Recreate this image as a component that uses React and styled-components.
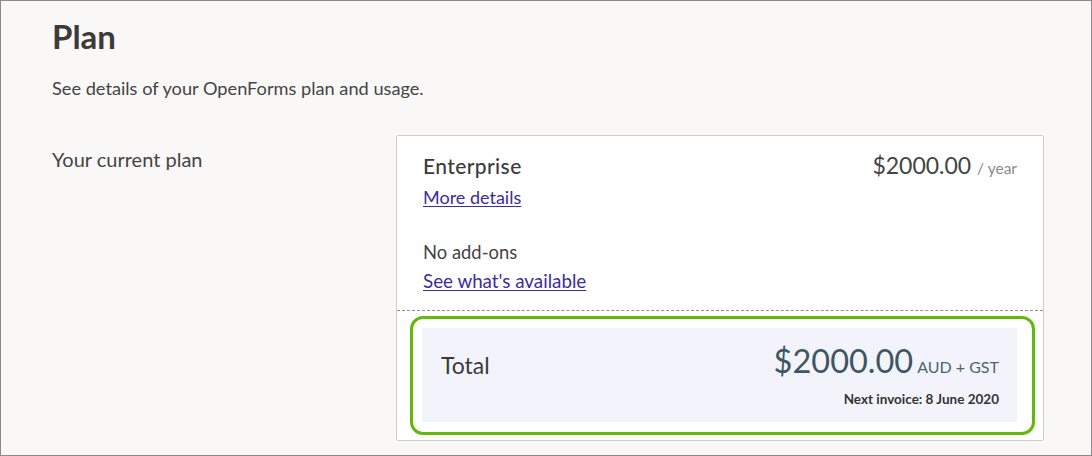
import React from "react";
import styled, { createGlobalStyle } from "styled-components";

const GlobalStyle = createGlobalStyle`
  html, body {
    margin: 0;
    padding: 0;
  }
  body {
    font-family: "Lato", "Open Sans", sans-serif;
    color: #3c3c3c;
  }
`;

const Frame = styled.div`
  box-sizing: border-box;
  width: 1092px;
  height: 456px;
  border: 1px solid #8a8a8a;
  background: #f9f8f7;
  padding: 15px 0 0 51px;
  overflow: hidden;
`;

const Title = styled.h1`
  margin: 0;
  font-size: 33px;
  font-weight: 700;
  line-height: 40px;
  color: #3b3b3b;
`;

const Intro = styled.p`
  margin: 20px 0 0;
  font-size: 18.2px;
  line-height: 24px;
  color: #444;
`;

const Row = styled.div`
  display: grid;
  grid-template-columns: 344px 648px;
  margin-top: 35px;
`;

const Label = styled.div`
  font-size: 20px;
  line-height: 24px;
  color: #444;
  padding-top: 12px;
`;

const Card = styled.div`
  background: #fff;
  border: 1px solid #cfcfcf;
  border-radius: 2px;
`;

const Section = styled.div`
  padding: 15px 26px 17px 26px;
  border-bottom: 1px dashed #8f8f8f;
`;

const PlanLine = styled.div`
  display: flex;
  justify-content: space-between;
  align-items: baseline;
  line-height: 28px;
`;

const PlanName = styled.div`
  font-size: 21px;
  font-weight: 500;
  letter-spacing: 0.4px;
  color: #3b3b3b;
`;

const Price = styled.div`
  font-size: 23px;
  color: #444;
  span {
    font-size: 15.5px;
    color: #8a8a8a;
  }
`;

const Link = styled.a`
  display: inline-block;
  font-size: ${(p) => p.$size || 18}px;
  line-height: 24px;
  color: #3b2d9b;
  text-decoration: underline;
  text-underline-offset: 2px;
  margin-top: ${(p) => p.$gap || 0}px;
  cursor: pointer;
`;

const Plain = styled.div`
  font-size: 18.4px;
  line-height: 24px;
  color: #444;
  margin-top: ${(p) => p.$gap || 0}px;
`;

const Highlight = styled.div`
  margin: 5px 8px 5px 13px;
  border: 3px solid #63b80a;
  border-radius: 13px;
  padding: 9px 15px 10px 9px;
`;

const TotalBox = styled.div`
  box-sizing: border-box;
  height: 94px;
  background: #f3f4fb;
  display: flex;
  justify-content: space-between;
  align-items: flex-start;
  padding: 14px 18px 0 19px;
`;

const TotalLabel = styled.div`
  font-size: 23px;
  line-height: 30px;
  color: #3b3b3b;
  padding-top: 8px;
`;

const TotalRight = styled.div`
  text-align: right;
`;

const BigPrice = styled.div`
  font-size: 32.5px;
  line-height: 38px;
  color: #3d5664;
  span {
    font-size: 16px;
    color: #4b6472;
    margin-left: 4px;
  }
`;

const Invoice = styled.div`
  margin-top: 5px;
  font-size: 13.5px;
  line-height: 16px;
  font-weight: 700;
  color: #333;
`;

export default function App() {
  return (
    <>
      <GlobalStyle />
      <Frame>
        <Title>Plan</Title>
        <Intro>See details of your OpenForms plan and usage.</Intro>
        <Row>
          <Label>Your current plan</Label>
          <Card>
            <Section>
              <PlanLine>
                <PlanName>Enterprise</PlanName>
                <Price>
                  $2000.00 <span>/ year</span>
                </Price>
              </PlanLine>
              <Link $gap={3} $size={18}>More details</Link>
              <Plain $gap={31}>No add-ons</Plain>
              <Link $gap={5} $size={18.8}>See what's available</Link>
            </Section>
            <Highlight>
              <TotalBox>
                <TotalLabel>Total</TotalLabel>
                <TotalRight>
                  <BigPrice>
                    $2000.00<span>AUD + GST</span>
                  </BigPrice>
                  <Invoice>Next invoice: 8 June 2020</Invoice>
                </TotalRight>
              </TotalBox>
            </Highlight>
          </Card>
        </Row>
      </Frame>
    </>
  );
}
